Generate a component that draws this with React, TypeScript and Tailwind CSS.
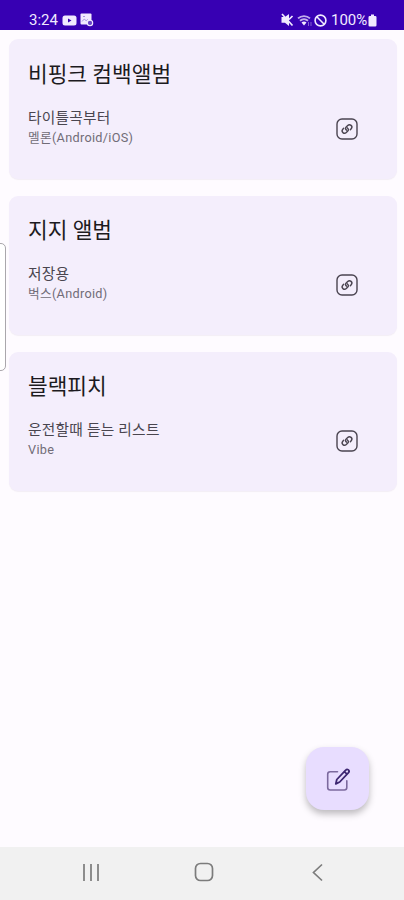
import React from 'react';

const albums = [
  { title: '비핑크 컴백앨범', description: '타이틀곡부터', platform: '멜론(Android/iOS)' },
  { title: '지지 앨범', description: '저장용', platform: '벅스(Android)' },
  { title: '블랙피치', description: '운전할때 듣는 리스트', platform: 'Vibe' }
];

const LinkIcon = () => (
  <svg className="w-[22px] h-[22px]" viewBox="0 0 22 22" fill="none" stroke="#4a4450" strokeLinecap="round" strokeLinejoin="round">
    <rect x="1" y="1" width="20" height="20" rx="5" strokeWidth="1.4" />
    <path d="M10.6 12.2c-1.3-.8-1.4-2.2-.4-3.2l1.5-1.5c2.2-2.2 5.6.8 3.5 3.2l-.9 1" strokeWidth="1.4" />
    <path d="M11.2 9.8c1.3.8 1.6 2.2.6 3.2l-1.5 1.5c-2.2 2.2-5.6-.8-3.5-3.2l.9-1" strokeWidth="1.4" />
  </svg>
);

const EditIcon = () => (
  <svg className="w-6 h-6" viewBox="0 0 24 24" fill="none" strokeLinecap="round" strokeLinejoin="round">
    <path d="M11.5 3.8H4.2Q1.7 3.8 1.7 6.3v13.2Q1.7 22 4.2 22h14.1q2.5 0 2.5-2.5v-6.8" stroke="#7c6a9e" strokeWidth="1.6" />
    <path d="M9.8 15.9l1-4.4 8.9-9.4a1.8 1.8 0 0 1 2.8 2.5l-8.8 9.4zM18.6 3.8l2.4 2.3" stroke="#3d2671" strokeWidth="1.8" />
  </svg>
);

const StatusBar = () => (
  <header className="h-[30px] shrink-0 bg-[#3700b3] pt-[10px] pl-[29px] pr-[27px] flex items-center justify-between text-[#f1eaff]">
    <div className="flex items-center">
      <span className="w-[33px] text-[15px] leading-none">3:24</span>
      <svg className="w-[15px] h-[11px]" viewBox="0 0 15 11">
        <rect x=".5" y=".5" width="14" height="10" rx="2.5" fill="currentColor" />
        <path d="M6 3.4v4.2l3.5-2.1z" fill="#3700b3" />
      </svg>
      <svg className="ml-[3px] w-[14px] h-[14px]" viewBox="0 0 14 14">
        <rect x=".5" y=".5" width="11" height="11" rx="1" fill="currentColor" />
        <path d="M2 8.5l2.2-2.4 2 1.6 1.5-1.3M3 3.5h2" stroke="#a794e0" fill="none" />
        <circle cx="10" cy="10" r="2.7" fill="#6a45c8" stroke="currentColor" strokeWidth="1.1" />
      </svg>
    </div>
    <div className="flex items-center">
      <svg className="w-[13px] h-[14px]" viewBox="0 0 13 14">
        <path d="M.5 4h3.5l4-3v12l-4-3.3H.5z" fill="currentColor" />
        <path d="M1 1l10.5 11.5M8 6.5L11.5 3" stroke="currentColor" strokeWidth="1.7" />
      </svg>
      <svg className="ml-[3px] w-[16px] h-[13px]" viewBox="0 0 16 13">
        <path d="M1 4.4a9 9 0 0 1 12 0M3 6.7a6 6 0 0 1 8 0" fill="none" stroke="currentColor" strokeWidth="1.9" opacity=".75" />
        <path d="M4.5 8.5a4 4 0 0 1 5 0L7 11.5z" fill="currentColor" />
        <path d="M11.5 8v4M14 8v4" stroke="currentColor" opacity=".4" />
      </svg>
      <svg className="ml-[1px] w-[13px] h-[13px]" viewBox="0 0 13 13">
        <circle cx="6.5" cy="6.5" r="5.4" fill="none" stroke="currentColor" strokeWidth="1.6" />
        <path d="M2.8 2.8l7.4 7.4" stroke="currentColor" strokeWidth="1.6" />
      </svg>
      <span className="ml-[4px] w-[37px] text-[15px] leading-none whitespace-nowrap">100%</span>
      <svg className="w-[9px] h-[13px]" viewBox="0 0 9 13">
        <path d="M3 .5h3V2h1.2q1.3 0 1.3 1.3v7.9q0 1.3-1.3 1.3H1.8Q.5 12.5.5 11.2V3.3Q.5 2 1.8 2H3z" fill="currentColor" />
      </svg>
    </div>
  </header>
);

const App = () => {
  return (
    <div className="relative flex h-[900px] w-[404px] flex-col overflow-hidden bg-[#fefbff] font-['Roboto','Noto_Sans_CJK_KR',sans-serif]">
      <StatusBar />

      <main className="flex flex-1 flex-col gap-[17px] pt-[9.4px] pl-[9px] pr-[7px]">
        {albums.map((album) => (
          <article
            key={album.title}
            className="flex h-[139.3px] justify-between rounded-[9px] bg-[#f4eefc] pl-[19px] pr-[39px] shadow-[0_1px_1px_rgba(60,40,80,0.06)]"
          >
            <div>
              <h2 className="mt-[20.5px] text-[21.4px] leading-[30px] text-[#1c1a20]">{album.title}</h2>
              <p className="mt-[18px] text-[14.7px] leading-[20px] tracking-[0.25px] text-[#49454f]">{album.description}</p>
              <p className="text-[12.7px] leading-[20px] tracking-[0.3px] text-[#716c77]">{album.platform}</p>
            </div>
            <button className="mt-[78.5px] h-[22px]">
              <LinkIcon />
            </button>
          </article>
        ))}
      </main>

      <div className="absolute left-[-2px] top-[243px] h-[128px] w-[8px] rounded-r-[5px] border border-[#aaa7ac] bg-white" />

      <button className="absolute left-[306px] top-[747px] flex h-[63px] w-[63px] items-center justify-center rounded-[18px] bg-[#e8ddff] pt-[2px] shadow-[0_4px_7px_rgba(0,0,0,0.26)]">
        <EditIcon />
      </button>

      <nav className="flex h-[53px] shrink-0 items-center bg-[#f1f1f1] pb-[3px] pl-[82px] text-[#7c7c7c]">
        <svg className="h-[19px] w-[18px]" viewBox="0 0 18 19" stroke="currentColor" strokeWidth="1.7">
          <path d="M2 1v17M9 1v17M16 1v17" />
        </svg>
        <svg className="ml-[94px] h-[20px] w-[20px]" viewBox="0 0 20 20" fill="none" stroke="currentColor" strokeWidth="1.7">
          <rect x="1.5" y="1.5" width="17" height="17" rx="5" />
        </svg>
        <svg className="ml-[98px] h-[19px] w-[12px]" viewBox="0 0 12 19" fill="none" stroke="currentColor" strokeWidth="1.7">
          <path d="M10 1.5l-8.5 8 8.5 8" />
        </svg>
      </nav>
    </div>
  );
};

export default App;
